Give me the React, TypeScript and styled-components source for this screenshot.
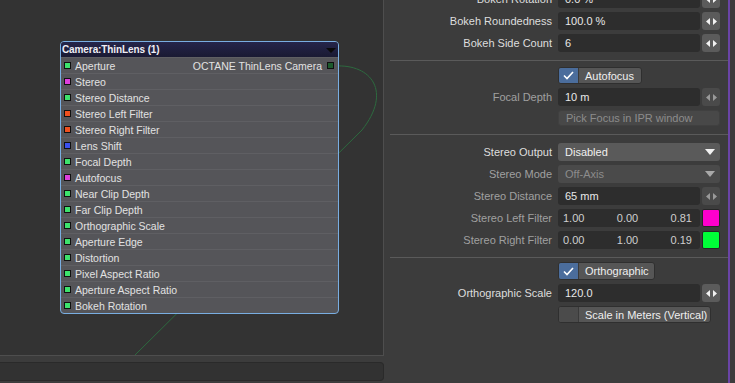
import React from "react";
import styled, { createGlobalStyle } from "styled-components";

// ─── Global ─────────────────────────────────────────────────────────────────
const GlobalStyle = createGlobalStyle`
  html, body { margin: 0; padding: 0; background: #3c3c3c; overflow: hidden; }
  body { font-family: "Liberation Sans", Arial, sans-serif; }
  * { box-sizing: border-box; }
`;

const Screen = styled.div`
  width: 735px;
  height: 383px;
  display: grid;
  grid-template-columns: 384px 346px 5px;
  background: #3c3c3c;
  overflow: hidden;
`;

// ─── Node editor (left) ─────────────────────────────────────────────────────
const LeftCol = styled.div`
  display: flex;
  flex-direction: column;
`;

const Canvas = styled.div`
  position: relative;
  height: 356px;
  background: #333333;
  border-right: 1px solid #4e4e4e;
  border-bottom: 1px solid #4e4e4e;
  overflow: hidden;
`;

const Wire = styled.svg`
  position: absolute;
  left: 0;
  top: 0;
`;

const StatusBar = styled.div`
  margin-top: 6px;
  height: 19px;
  width: 384px;
  background: #323232;
  border: 1px solid #2a2a2a;
  border-left: none;
  border-radius: 0 4px 4px 0;
`;

const Node = styled.div`
  position: absolute;
  left: 60px;
  top: 41px;
  width: 279px;
  border: 1px solid #79aee2;
  border-radius: 4px;
  overflow: hidden;
  background: #555559;
`;

const NodeHeader = styled.div`
  height: 15px;
  display: flex;
  align-items: center;
  justify-content: space-between;
  padding: 0 2px 0 1px;
  background: linear-gradient(#25254a, #1a1a33);
  color: #eeeef4;
  font-size: 10px;
  font-weight: bold;
  letter-spacing: -0.1px;
`;

const HeaderArrow = styled.span`
  width: 0;
  height: 0;
  border-left: 5px solid transparent;
  border-right: 5px solid transparent;
  border-top: 5px solid #0a0a0a;
  margin-top: 1px;
`;

const Port = styled.div`
  height: 16px;
  display: flex;
  align-items: center;
  padding: 0 4px 0 3px;
  border-top: 1px solid #5f5f63;
  color: #e2e2e2;
  font-size: 10.5px;
  white-space: nowrap;
`;

const PortName = styled.span`
  flex: 1;
`;

const OutName = styled.span`
  margin-right: 5px;
`;

const Socket = styled.span<{ $c: string }>`
  width: 7px;
  height: 7px;
  flex: none;
  background: ${(p) => p.$c};
  border: 1px solid #101010;
  margin-right: 4px;
`;

const OutSocket = styled(Socket)`
  margin-right: 0;
`;

// ─── Properties panel (right) ───────────────────────────────────────────────
const Panel = styled.div`
  border-right: 2px solid #6a44a6;
  display: flex;
  flex-direction: column;
`;

const Group = styled.div<{ $pt: number; $pb: number; $mt?: number }>`
  display: flex;
  flex-direction: column;
  gap: 4px;
  margin-top: ${(p) => p.$mt ?? 0}px;
  padding: ${(p) => p.$pt}px 0 ${(p) => p.$pb}px;
`;

const Divider = styled.div`
  height: 1px;
  margin-left: 6px;
  background: #5a5a5a;
`;

const Row = styled.div<{ $h?: number }>`
  display: grid;
  grid-template-columns: 168px 162px;
  column-gap: 6px;
  height: ${(p) => p.$h ?? 18}px;
  align-items: stretch;
`;

const Label = styled.div<{ $dim?: boolean }>`
  display: flex;
  align-items: center;
  justify-content: flex-end;
  font-size: 11px;
  color: ${(p) => (p.$dim ? "#a0a0a0" : "#dedede")};
  white-space: nowrap;
`;

const Control = styled.div`
  display: grid;
  grid-template-columns: 142px 18px;
  column-gap: 2px;
`;

const Field = styled.div`
  display: flex;
  align-items: center;
  padding-left: 7px;
  background: #2d2d2d;
  border-radius: 3px;
  color: #e8e8e8;
  font-size: 11px;
`;

const TripleField = styled.div`
  display: grid;
  grid-template-columns: 1fr 1fr 1fr;
  align-items: center;
  padding: 0 8px 0 5px;
  background: #2d2d2d;
  border-radius: 3px;
  color: #cfcfcf;
  font-size: 11px;
  span:nth-child(2) { text-align: center; }
  span:nth-child(3) { text-align: right; }
`;

const Stepper = styled.div<{ $dim?: boolean }>`
  display: flex;
  align-items: center;
  justify-content: center;
  background: ${(p) => (p.$dim ? "#4a4a4a" : "#5b5b5b")};
  border-radius: 3px;
`;

const Swatch = styled.div<{ $c: string }>`
  background: ${(p) => p.$c};
  border: 1px solid #262626;
  border-radius: 2px;
`;

const Dropdown = styled.div<{ $dim?: boolean }>`
  display: flex;
  align-items: center;
  justify-content: space-between;
  padding: 0 5px 0 7px;
  background: ${(p) => (p.$dim ? "#4a4a4a" : "#5a5a5a")};
  border-radius: 3px;
  color: ${(p) => (p.$dim ? "#8c8c8c" : "#f0f0f0")};
  font-size: 11px;
`;

const CheckButton = styled.div<{ $w: number }>`
  width: ${(p) => p.$w}px;
  display: flex;
  border: 1px solid #2f2f2f;
  border-radius: 3px;
  overflow: hidden;
  background: #565656;
`;

const CheckBox = styled.span<{ $on?: boolean }>`
  width: 20px;
  flex: none;
  display: flex;
  align-items: center;
  justify-content: center;
  background: ${(p) => (p.$on ? "#4b6d9c" : "#4b4b4b")};
  border-right: 1px solid #3a3a3a;
`;

const CheckText = styled.span`
  display: flex;
  align-items: center;
  padding-left: 6px;
  color: #efefef;
  font-size: 11px;
  white-space: nowrap;
`;

const FlatButton = styled.div`
  display: flex;
  align-items: center;
  padding-left: 7px;
  background: #484848;
  border: 1px solid #404040;
  border-radius: 3px;
  color: #8c8c8c;
  font-size: 11px;
`;

// ─── Icons ──────────────────────────────────────────────────────────────────
const StepIcon: React.FC<{ dim?: boolean }> = ({ dim }) => (
  <svg width="11" height="7" viewBox="0 0 11 7">
    <path d="M4 0 L0 3.5 L4 7 Z M7 0 L11 3.5 L7 7 Z" fill={dim ? "#9a9a9a" : "#f2f2f2"} />
  </svg>
);

const DownIcon: React.FC<{ dim?: boolean }> = ({ dim }) => (
  <svg width="10" height="6" viewBox="0 0 10 6">
    <path d="M0 0 H10 L5 6 Z" fill={dim ? "#a8a8a8" : "#f2f2f2"} />
  </svg>
);

const CheckIcon = () => (
  <svg width="11" height="9" viewBox="0 0 11 9">
    <path d="M1 4.5 L4 7.5 L10 1" stroke="#ffffff" strokeWidth="1.6" fill="none" />
  </svg>
);

// ─── Data ───────────────────────────────────────────────────────────────────
const GREEN = "#3de26c";
const PINK = "#dd3fdd";
const RED = "#f0501f";
const BLUE = "#3a50ee";

const ports: [string, string][] = [
  ["Aperture", GREEN],
  ["Stereo", PINK],
  ["Stereo Distance", GREEN],
  ["Stereo Left Filter", RED],
  ["Stereo Right Filter", RED],
  ["Lens Shift", BLUE],
  ["Focal Depth", GREEN],
  ["Autofocus", PINK],
  ["Near Clip Depth", GREEN],
  ["Far Clip Depth", GREEN],
  ["Orthographic Scale", GREEN],
  ["Aperture Edge", GREEN],
  ["Distortion", GREEN],
  ["Pixel Aspect Ratio", GREEN],
  ["Aperture Aspect Ratio", GREEN],
  ["Bokeh Rotation", GREEN],
];

const NumberRow: React.FC<{ label: string; value: string; dim?: boolean }> = ({ label, value, dim }) => (
  <Row>
    <Label $dim={dim}>{label}</Label>
    <Control>
      <Field>{value}</Field>
      <Stepper $dim={dim}>
        <StepIcon dim={dim} />
      </Stepper>
    </Control>
  </Row>
);

const FilterRow: React.FC<{ label: string; values: string[]; color: string }> = ({ label, values, color }) => (
  <Row>
    <Label $dim>{label}</Label>
    <Control>
      <TripleField>
        {values.map((v, i) => (
          <span key={i}>{v}</span>
        ))}
      </TripleField>
      <Swatch $c={color} />
    </Control>
  </Row>
);

// ─── Component ──────────────────────────────────────────────────────────────
const App: React.FC = () => {
  return (
    <Screen>
      <GlobalStyle />
      <LeftCol>
        <Canvas>
          <Wire width="383" height="355" viewBox="0 0 383 355">
            <path
              d="M335 66 C372 64 392 92 362 130 L132 358"
              stroke="#2d6a3f"
              strokeWidth="1"
              fill="none"
            />
          </Wire>
          <Node>
            <NodeHeader>
              <span>Camera:ThinLens (1)</span>
              <HeaderArrow />
            </NodeHeader>
            {ports.map(([name, c], i) => (
              <Port key={name}>
                <Socket $c={c} />
                <PortName>{name}</PortName>
                {i === 0 && (
                  <>
                    <OutName>OCTANE ThinLens Camera</OutName>
                    <OutSocket $c="#1d5a2c" />
                  </>
                )}
              </Port>
            ))}
          </Node>
        </Canvas>
        <StatusBar />
      </LeftCol>

      <Panel>
        <Group $mt={-10} $pt={0} $pb={8}>
          <NumberRow label="Bokeh Rotation" value="0.0 %" />
          <NumberRow label="Bokeh Roundedness" value="100.0 %" />
          <NumberRow label="Bokeh Side Count" value="6" />
        </Group>
        <Divider />
        <Group $pt={6} $pb={8}>
          <Row $h={17}>
            <span />
            <CheckButton $w={84}>
              <CheckBox $on>
                <CheckIcon />
              </CheckBox>
              <CheckText>Autofocus</CheckText>
            </CheckButton>
          </Row>
          <NumberRow label="Focal Depth" value="10 m" dim />
          <Row $h={16}>
            <span />
            <FlatButton>Pick Focus in IPR window</FlatButton>
          </Row>
        </Group>
        <Divider />
        <Group $pt={8} $pb={8}>
          <Row>
            <Label>Stereo Output</Label>
            <Dropdown>
              <span>Disabled</span>
              <DownIcon />
            </Dropdown>
          </Row>
          <Row>
            <Label $dim>Stereo Mode</Label>
            <Dropdown $dim>
              <span>Off-Axis</span>
              <DownIcon dim />
            </Dropdown>
          </Row>
          <NumberRow label="Stereo Distance" value="65 mm" dim />
          <FilterRow label="Stereo Left Filter" values={["1.00", "0.00", "0.81"]} color="#ff00cc" />
          <FilterRow label="Stereo Right Filter" values={["0.00", "1.00", "0.19"]} color="#00ff38" />
        </Group>
        <Divider />
        <Group $pt={4} $pb={0}>
          <Row>
            <span />
            <CheckButton $w={97}>
              <CheckBox $on>
                <CheckIcon />
              </CheckBox>
              <CheckText>Orthographic</CheckText>
            </CheckButton>
          </Row>
          <NumberRow label="Orthographic Scale" value="120.0" />
          <Row $h={17}>
            <span />
            <CheckButton $w={153}>
              <CheckBox />
              <CheckText>Scale in Meters (Vertical)</CheckText>
            </CheckButton>
          </Row>
        </Group>
      </Panel>
      <div />
    </Screen>
  );
};

export default App;
